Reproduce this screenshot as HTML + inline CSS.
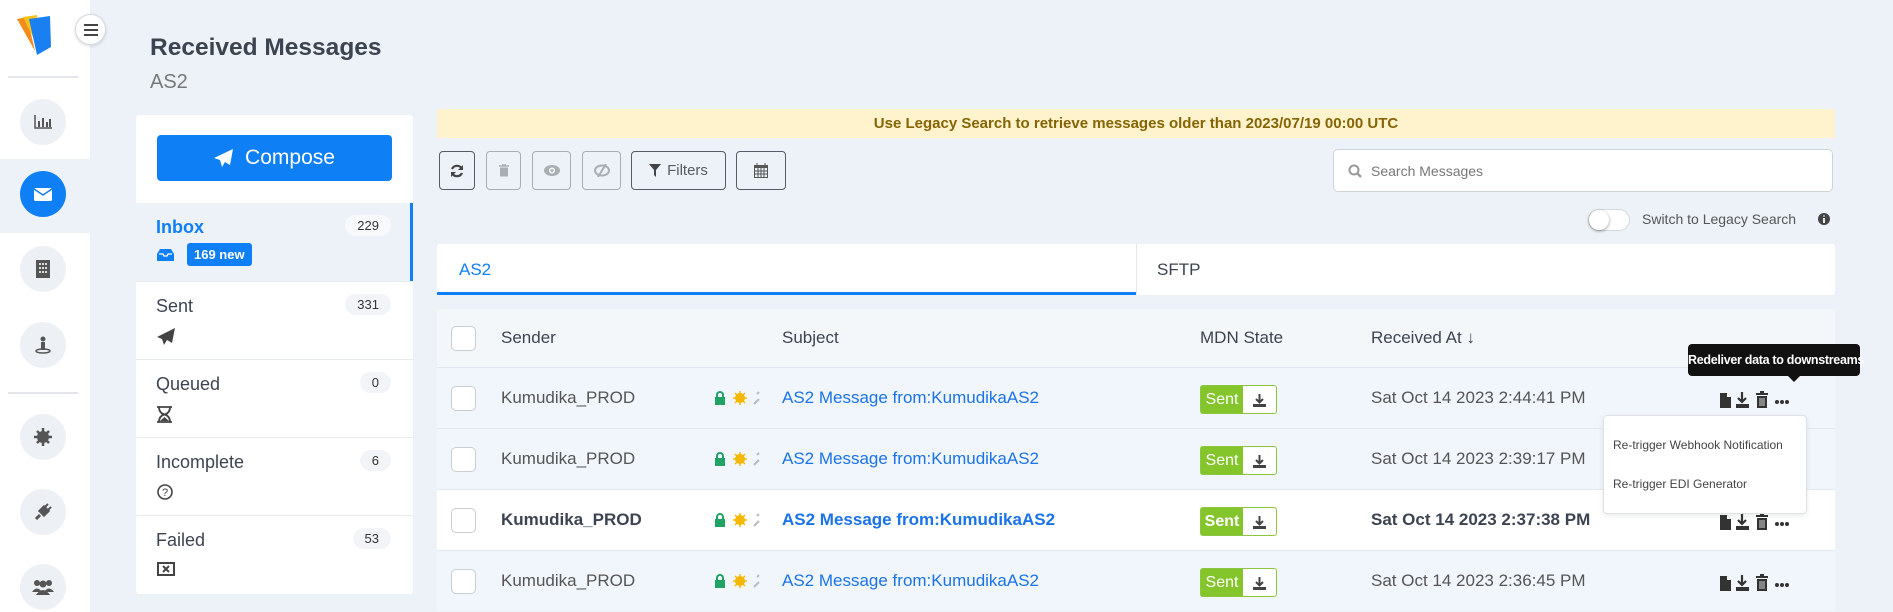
<!DOCTYPE html>
<html><head><meta charset="utf-8"><style>
*{box-sizing:border-box;margin:0;padding:0}
body{width:1893px;height:612px;overflow:hidden;background:#edf2f8;font-family:"Liberation Sans",sans-serif;color:#3d4451;position:relative}
.a{position:absolute}
.side{left:0;top:0;width:90px;height:612px;background:#fff}
.ic{position:absolute;left:20px;width:46px;height:46px;border-radius:50%;background:#edf0f4;display:flex;align-items:center;justify-content:center}
.hr{position:absolute;left:8px;width:70px;height:2px;background:#e3e7ec}
.btn{position:absolute;top:151px;height:39px;border:1px solid #555c66;border-radius:4px;display:flex;align-items:center;justify-content:center;color:#555c66}
.btn.dis{border-color:#a9aeb5;color:#a9aeb5}
.row{position:absolute;left:437px;width:1398px;height:61px;border-top:1px solid #e2e8ef;font-size:17px}
.row span{position:absolute;top:20px}
.cb{position:absolute;left:14px;top:18px;width:25px;height:25px;border:1px solid #c9ced5;border-radius:5px;background:#fff}
.sent{position:absolute;left:763px;top:17px;width:77px;height:29px;border:1px solid #8cc63f;border-radius:3px;background:#fff}
.sent b{position:absolute;left:0;top:0;width:42px;height:27px;background:#84c52c;color:#fff;font-weight:normal;font-size:16px;line-height:27px;text-align:center}
.sent i{position:absolute;left:52px;top:6px}
.mb{position:absolute;left:0;width:277px;border-top:1px solid #e8ecf1}
.mb .t{position:absolute;left:20px;top:14px;font-size:18px}
.mb .n{position:absolute;right:22px;top:12px;background:#f2f4f7;border-radius:12px;padding:3px 12px;font-size:13px;color:#333}
</style></head><body>
<div class="a side">
  <svg class="a" style="left:15px;top:13px" width="40" height="44" viewBox="0 0 40 44"><path d="M2 6 L12 4 L20 38 Z" fill="#f28c1c"/><path d="M8 4 L22 2 L24 36 Z" fill="#f7c21a"/><path d="M14 6 L35 3 L36 34 L22 42 Z" fill="#1a7ff0"/></svg>
  <div class="a" style="left:75px;top:14px;width:31px;height:31px;border-radius:50%;background:#fff;border:1px solid #d6dbe1;box-shadow:0 1px 3px rgba(0,0,0,.15);display:flex;align-items:center;justify-content:center"><svg width="14" height="12"><path d="M0 1h14M0 6h14M0 11h14" stroke="#444" stroke-width="2"/></svg></div>
  <div class="hr" style="top:76px"></div>
  <div class="ic" style="top:99px"><svg width="18" height="14"><path d="M1 0v13h17" stroke="#555" fill="none" stroke-width="1.5"/><path d="M4 6h2v6H4zM8 3h2v9H8zM12 7h2v5h-2zM15 4h2v8h-2z" fill="#555"/></svg></div>
  <div class="a" style="left:0;top:159px;width:90px;height:74px;background:#edf2f8"></div>
  <div class="ic" style="top:171px;background:#0f7ff5"><svg width="18" height="13"><rect width="18" height="13" rx="1.5" fill="#fff"/><path d="M0 1l9 6 9-6" stroke="#0f7ff5" stroke-width="1.5" fill="none"/></svg></div>
  <div class="ic" style="top:246px"><svg width="14" height="18"><rect width="14" height="18" fill="#555"/><path d="M3 3h2v2H3zM6 3h2v2H6zM9 3h2v2H9zM3 7h2v2H3zM6 7h2v2H6zM9 7h2v2H9zM3 11h2v2H3zM6 11h2v2H6zM9 11h2v2H9z" fill="#ddd"/></svg></div>
  <div class="ic" style="top:322px"><svg width="16" height="18"><circle cx="8" cy="3" r="2.5" fill="#555"/><rect x="6" y="6" width="4" height="8" fill="#555"/><ellipse cx="8" cy="15" rx="7" ry="2" fill="none" stroke="#555" stroke-width="1.5"/></svg></div>
  <div class="hr" style="top:392px"></div>
  <div class="ic" style="top:414px"><svg width="18" height="18"><circle cx="9" cy="9" r="6" fill="#555"/><path d="M9 0v18M0 9h18M3 3l12 12M15 3L3 15" stroke="#555" stroke-width="2.5"/></svg></div>
  <div class="ic" style="top:489px"><svg width="18" height="18"><path d="M2 16l4-4M6 8l4 4 4-4-4-4z" stroke="#555" stroke-width="3" fill="#555"/><path d="M11 4l3-3M14 7l3-3" stroke="#555" stroke-width="2"/></svg></div>
  <div class="ic" style="top:564px"><svg width="22" height="16"><circle cx="5" cy="4" r="3" fill="#555"/><circle cx="17" cy="4" r="3" fill="#555"/><circle cx="11" cy="5" r="3.5" fill="#555"/><path d="M0 13q5-7 10 0zM12 13q5-7 10 0zM4 16q7-10 14 0z" fill="#555"/></svg></div>
</div>

<div class="a" style="left:150px;top:34px;font-size:24.5px;font-weight:bold;color:#3d4451">Received Messages</div>
<div class="a" style="left:150px;top:71px;font-size:20px;color:#777">AS2</div>

<div class="a" style="left:136px;top:115px;width:277px;height:479px;background:#fff;border-radius:3px">
  <div class="a" style="left:21px;top:20px;width:235px;height:46px;background:#0f7ff5;border-radius:4px;color:#fff;font-size:21px;display:flex;align-items:center;justify-content:center;gap:12px"><svg width="19" height="18"><path d="M19 0L0 9l6 2 2 7 3-5 5 3z" fill="#fff"/></svg>Compose</div>
  <div class="mb" style="top:88px;height:78px;background:#edf2f8;border-top:none"><div class="a" style="right:0;top:0;width:3px;height:78px;background:#0f7ff5"></div>
    <div class="t" style="color:#0f7ff5;font-weight:bold">Inbox</div><div class="n" style="background:#f7f9fb">229</div>
    <svg class="a" style="left:21px;top:46px" width="17" height="12"><path d="M0 5l3-5h11l3 5v7H0z" fill="#0f7ff5"/><path d="M2 5h4l1 2h3l1-2h4" stroke="#fff" stroke-width="1.3" fill="none"/></svg>
    <div class="a" style="left:51px;top:40px;background:#0f7ff5;color:#fff;border-radius:3px;font-size:13px;font-weight:bold;padding:4px 7px">169 new</div></div>
  <div class="mb" style="top:166px;height:78px"><div class="t">Sent</div><div class="n">331</div><svg class="a" style="left:21px;top:46px" width="18" height="17"><path d="M18 0L0 9l5 2 2 6 3-5 5 3z" fill="#444"/></svg></div>
  <div class="mb" style="top:244px;height:78px"><div class="t">Queued</div><div class="n">0</div><svg class="a" style="left:21px;top:46px" width="15" height="17"><path d="M0 1h15M0 16h15M2 1q0 6 5.5 7.5Q2 10 2 16M13 1q0 6-5.5 7.5Q13 10 13 16" stroke="#444" stroke-width="1.8" fill="none"/><path d="M3 15l4.5-4 4.5 4z" fill="#444"/></svg></div>
  <div class="mb" style="top:322px;height:78px"><div class="t">Incomplete</div><div class="n">6</div><svg class="a" style="left:21px;top:46px" width="16" height="16"><circle cx="8" cy="8" r="7" stroke="#444" stroke-width="1.6" fill="none"/><text x="8" y="12" font-size="11" text-anchor="middle" fill="#444" font-family="Liberation Sans">?</text></svg></div>
  <div class="mb" style="top:400px;height:79px"><div class="t">Failed</div><div class="n">53</div><svg class="a" style="left:21px;top:46px" width="18" height="14"><rect x="1" y="1" width="16" height="12" stroke="#444" stroke-width="2" fill="none"/><path d="M6 4l6 6M12 4l-6 6" stroke="#444" stroke-width="2"/></svg></div>
</div>

<div class="a" style="left:437px;top:109px;width:1398px;height:29px;background:#fff3cd;color:#856404;font-weight:bold;font-size:15px;text-align:center;line-height:29px">Use Legacy Search to retrieve messages older than 2023/07/19 00:00 UTC</div>

<div class="btn" style="left:439px;width:36px"><svg width="14" height="14"><path d="M12 5A5.5 5.5 0 0 0 2 5M2 9a5.5 5.5 0 0 0 10 0" stroke="#444" stroke-width="2.2" fill="none"/><path d="M13 1v5H8zM1 13V8h5z" fill="#444"/></svg></div>
<div class="btn dis" style="left:486px;width:35px"><svg width="10" height="13"><path d="M0 2h10M3 1h4" stroke="#a9aeb5" stroke-width="1.5"/><rect x="1" y="3.5" width="8" height="9" fill="#a9aeb5"/></svg></div>
<div class="btn dis" style="left:532px;width:39px"><svg width="16" height="11"><ellipse cx="8" cy="5.5" rx="8" ry="5.5" fill="#a9aeb5"/><circle cx="8" cy="5.5" r="3" fill="#fff"/><circle cx="8" cy="5.5" r="1.6" fill="#a9aeb5"/></svg></div>
<div class="btn dis" style="left:582px;width:39px"><svg width="16" height="13"><ellipse cx="8" cy="6.5" rx="7" ry="5" stroke="#a9aeb5" stroke-width="2" fill="none"/><path d="M12 0L4 13" stroke="#a9aeb5" stroke-width="2"/></svg></div>
<div class="btn" style="left:631px;width:95px;font-size:15px;gap:6px"><svg width="12" height="13"><path d="M0 0h12L7 6v7L5 11V6z" fill="#444"/></svg>Filters</div>
<div class="btn" style="left:736px;width:50px"><svg width="14" height="15"><rect x="0.5" y="2.5" width="13" height="12" stroke="#555" fill="none"/><rect x="0" y="2" width="14" height="3" fill="#555"/><path d="M3 0v3M11 0v3M0 8h14M0 11h14M4 5v10M7 5v10M10 5v10" stroke="#555"/></svg></div>

<div class="a" style="left:1333px;top:149px;width:500px;height:43px;background:#fff;border:1px solid #ced4da;border-radius:5px"><svg class="a" style="left:14px;top:14px" width="14" height="14"><circle cx="6" cy="6" r="4.5" stroke="#999" stroke-width="2" fill="none"/><path d="M9 9l4 4" stroke="#999" stroke-width="2.3"/></svg><span class="a" style="left:37px;top:13px;font-size:14px;color:#777">Search Messages</span></div>
<div class="a" style="left:1588px;top:209px;width:42px;height:22px;border-radius:11px;background:#fff;border:1px solid #d3d8de"><div class="a" style="left:0;top:0;width:20px;height:20px;border-radius:50%;background:#fff;box-shadow:0 1px 3px rgba(0,0,0,.4)"></div></div>
<div class="a" style="left:1642px;top:211px;font-size:14px;color:#555">Switch to Legacy Search</div>
<svg class="a" style="left:1818px;top:213px" width="12" height="12"><circle cx="6" cy="6" r="6" fill="#444"/><path d="M6 5v5M6 2.5v1" stroke="#fff" stroke-width="1.8"/></svg>

<div class="a" style="left:437px;top:244px;width:1398px;height:51px;background:#fff;border-radius:3px"></div>
<div class="a" style="left:437px;top:292px;width:699px;height:3px;background:#0f7ff5"></div>
<div class="a" style="left:1136px;top:244px;width:1px;height:51px;background:#e3e7ec"></div>
<div class="a" style="left:459px;top:260px;font-size:17px;color:#0f7ff5">AS2</div>
<div class="a" style="left:1157px;top:260px;font-size:17px;color:#3d4451">SFTP</div>

<div class="row" style="top:309px;height:58px;background:#f4f7fa;border-top:none"><div class="cb" style="top:17px"></div><span style="left:64px;top:19px">Sender</span><span style="left:345px;top:19px">Subject</span><span style="left:763px;top:19px">MDN State</span><span style="left:934px;top:19px">Received At ↓</span></div>

<div class="row" style="top:367px;background:#f1f6fc"><div class="cb"></div><span style="left:64px;color:#555">Kumudika_PROD</span>
<svg class="a" style="left:278px;top:23px" width="45" height="15"><rect x="0" y="6" width="10" height="8" fill="#21a366"/><path d="M2 7V4a3 3 0 0 1 6 0v3" stroke="#21a366" stroke-width="2" fill="none"/><circle cx="25" cy="7" r="5" fill="#f5b800"/><path d="M25 0v14M18 7h14M20 2l10 10M30 2L20 12" stroke="#f5b800" stroke-width="1.5"/><path d="M39 13l5-5M42 3l2-2" stroke="#bbb" stroke-width="2"/></svg>
<span style="left:345px;color:#1a73e8">AS2 Message from:KumudikaAS2</span>
<div class="sent"><b>Sent</b><i><svg width="13" height="13"><path d="M6.5 0v8M3 5l3.5 3.5L10 5" stroke="#444" stroke-width="2" fill="none"/><rect x="0" y="10" width="13" height="3" fill="#444"/></svg></i></div>
<span style="left:934px;color:#555">Sat Oct 14 2023 2:44:41 PM</span></div>

<div class="row" style="top:428px;background:#f1f6fc"><div class="cb"></div><span style="left:64px;color:#555">Kumudika_PROD</span>
<svg class="a" style="left:278px;top:23px" width="45" height="15"><rect x="0" y="6" width="10" height="8" fill="#21a366"/><path d="M2 7V4a3 3 0 0 1 6 0v3" stroke="#21a366" stroke-width="2" fill="none"/><circle cx="25" cy="7" r="5" fill="#f5b800"/><path d="M25 0v14M18 7h14M20 2l10 10M30 2L20 12" stroke="#f5b800" stroke-width="1.5"/><path d="M39 13l5-5M42 3l2-2" stroke="#bbb" stroke-width="2"/></svg>
<span style="left:345px;color:#1a73e8">AS2 Message from:KumudikaAS2</span>
<div class="sent"><b>Sent</b><i><svg width="13" height="13"><path d="M6.5 0v8M3 5l3.5 3.5L10 5" stroke="#444" stroke-width="2" fill="none"/><rect x="0" y="10" width="13" height="3" fill="#444"/></svg></i></div>
<span style="left:934px;color:#555">Sat Oct 14 2023 2:39:17 PM</span></div>

<div class="row" style="top:489px;background:#fff;font-weight:bold"><div class="cb"></div><span style="left:64px">Kumudika_PROD</span>
<svg class="a" style="left:278px;top:23px" width="45" height="15"><rect x="0" y="6" width="10" height="8" fill="#21a366"/><path d="M2 7V4a3 3 0 0 1 6 0v3" stroke="#21a366" stroke-width="2" fill="none"/><circle cx="25" cy="7" r="5" fill="#f5b800"/><path d="M25 0v14M18 7h14M20 2l10 10M30 2L20 12" stroke="#f5b800" stroke-width="1.5"/><path d="M39 13l5-5M42 3l2-2" stroke="#bbb" stroke-width="2"/></svg>
<span style="left:345px;color:#1a73e8">AS2 Message from:KumudikaAS2</span>
<div class="sent"><b style="font-weight:bold">Sent</b><i><svg width="13" height="13"><path d="M6.5 0v8M3 5l3.5 3.5L10 5" stroke="#444" stroke-width="2" fill="none"/><rect x="0" y="10" width="13" height="3" fill="#444"/></svg></i></div>
<span style="left:934px">Sat Oct 14 2023 2:37:38 PM</span></div>

<div class="row" style="top:550px;background:#f1f6fc"><div class="cb"></div><span style="left:64px;color:#555">Kumudika_PROD</span>
<svg class="a" style="left:278px;top:23px" width="45" height="15"><rect x="0" y="6" width="10" height="8" fill="#21a366"/><path d="M2 7V4a3 3 0 0 1 6 0v3" stroke="#21a366" stroke-width="2" fill="none"/><circle cx="25" cy="7" r="5" fill="#f5b800"/><path d="M25 0v14M18 7h14M20 2l10 10M30 2L20 12" stroke="#f5b800" stroke-width="1.5"/><path d="M39 13l5-5M42 3l2-2" stroke="#bbb" stroke-width="2"/></svg>
<span style="left:345px;color:#1a73e8">AS2 Message from:KumudikaAS2</span>
<div class="sent"><b>Sent</b><i><svg width="13" height="13"><path d="M6.5 0v8M3 5l3.5 3.5L10 5" stroke="#444" stroke-width="2" fill="none"/><rect x="0" y="10" width="13" height="3" fill="#444"/></svg></i></div>
<span style="left:934px;color:#555">Sat Oct 14 2023 2:36:45 PM</span></div>

<svg class="a" style="left:1719px;top:391px" width="86" height="18"><g id="ac"><path d="M1 2h7l4 4v11H1z" fill="#333"/><path d="M8 2v4h4" fill="#fff"/><path d="M23 1v9M19 7l4 4 4-4" stroke="#333" stroke-width="2.2" fill="none"/><rect x="17" y="13" width="13" height="4" fill="#333"/><path d="M37 3h12M41 1h4" stroke="#333" stroke-width="2"/><rect x="38" y="5" width="10" height="12" fill="#333"/><path d="M41 7v8M43 7v8M45 7v8" stroke="#fff" stroke-width="0.8"/><circle cx="58" cy="11" r="2" fill="#333"/><circle cx="63" cy="11" r="2" fill="#333"/><circle cx="68" cy="11" r="2" fill="#333"/></g></svg>
<svg class="a" style="left:1719px;top:513px" width="86" height="18"><use href="#ac"/></svg>
<svg class="a" style="left:1719px;top:574px" width="86" height="18"><use href="#ac"/></svg>

<div class="a" style="left:1688px;top:344px;width:172px;height:32px;background:#111;color:#fff;border-radius:4px;font-size:12.5px;font-weight:bold;line-height:32px;text-align:center;white-space:nowrap;letter-spacing:-0.3px">Redeliver data to downstreams</div>
<div class="a" style="left:1788px;top:376px;width:0;height:0;border-left:6px solid transparent;border-right:6px solid transparent;border-top:6px solid #111"></div>
<div class="a" style="left:1603px;top:415px;width:204px;height:99px;background:#fff;border:1px solid #dde2e8;border-radius:4px;box-shadow:0 2px 6px rgba(0,0,0,.08);font-size:12px;color:#444"><div class="a" style="left:9px;top:22px">Re-trigger Webhook Notification</div><div class="a" style="left:9px;top:61px">Re-trigger EDI Generator</div></div>
</body></html>
